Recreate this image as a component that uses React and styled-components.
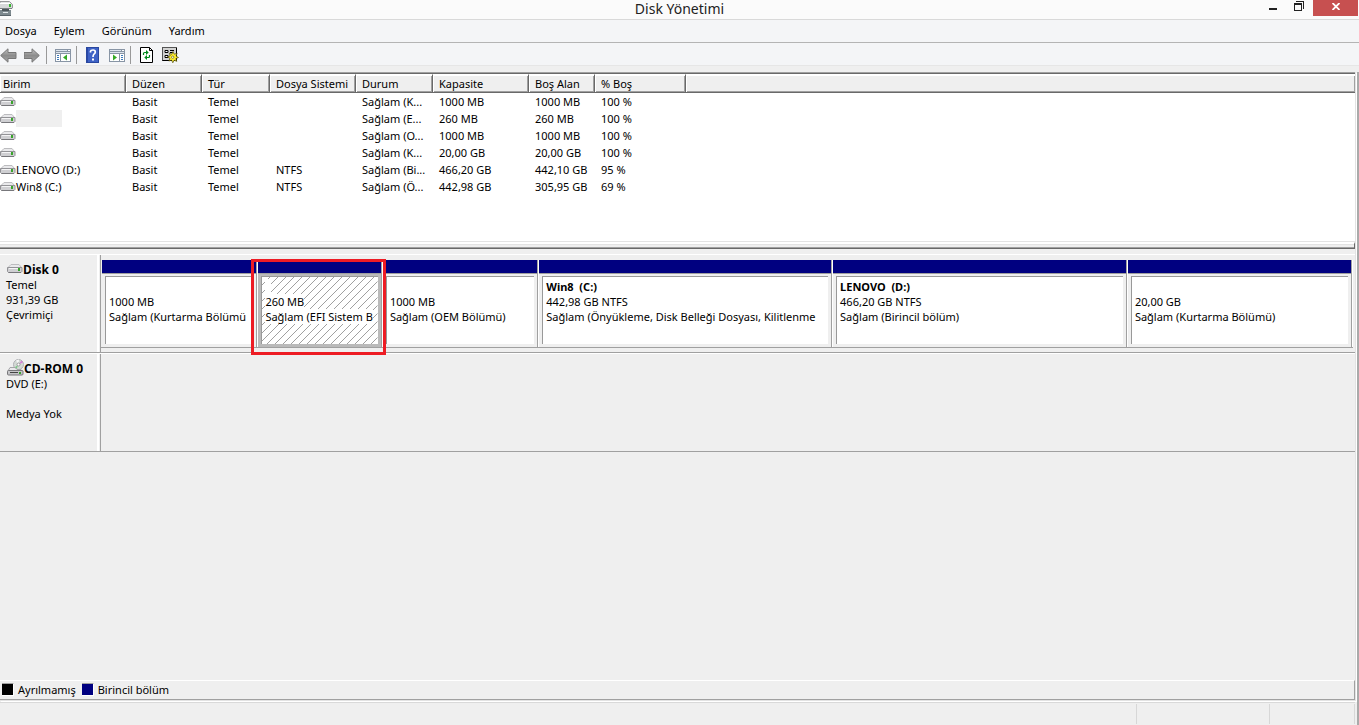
import React from 'react';
import styled, { createGlobalStyle } from 'styled-components';

const volumes = [
    { name: '', fs: '', status: 'Sağlam (K...', size: '1000 MB', free: '1000 MB', pct: '100 %' },
    { name: '', fs: '', status: 'Sağlam (E...', size: '260 MB', free: '260 MB', pct: '100 %', marked: true },
    { name: '', fs: '', status: 'Sağlam (O...', size: '1000 MB', free: '1000 MB', pct: '100 %' },
    { name: '', fs: '', status: 'Sağlam (K...', size: '20,00 GB', free: '20,00 GB', pct: '100 %' },
    { name: 'LENOVO (D:)', fs: 'NTFS', status: 'Sağlam (Bi...', size: '466,20 GB', free: '442,10 GB', pct: '95 %' },
    { name: 'Win8 (C:)', fs: 'NTFS', status: 'Sağlam (Ö...', size: '442,98 GB', free: '305,95 GB', pct: '69 %' },
];

const columns = [
    { title: 'Birim', width: 126 },
    { title: 'Düzen', width: 76 },
    { title: 'Tür', width: 68 },
    { title: 'Dosya Sistemi', width: 86 },
    { title: 'Durum', width: 77 },
    { title: 'Kapasite', width: 96 },
    { title: 'Boş Alan', width: 66 },
    { title: '% Boş', width: 91 },
];

const partitions = [
    { share: 156, name: '', size: '1000 MB', status: 'Sağlam (Kurtarma Bölümü' },
    { share: 124, name: '', size: '260 MB', status: 'Sağlam (EFI Sistem B', selected: true },
    { share: 156, name: '', size: '1000 MB', status: 'Sağlam (OEM Bölümü)' },
    { share: 294, name: 'Win8  (C:)', size: '442,98 GB NTFS', status: 'Sağlam (Önyükleme, Disk Belleği Dosyası, Kilitlenme' },
    { share: 295, name: 'LENOVO  (D:)', size: '466,20 GB NTFS', status: 'Sağlam (Birincil bölüm)' },
    { share: 225, name: '', size: '20,00 GB', status: 'Sağlam (Kurtarma Bölümü)' },
];

const GlobalStyle = createGlobalStyle`
    * {
        box-sizing: border-box;
    }
    body {
        margin: 0;
        background: #efefef;
        color: #000;
        font-family: "Noto Sans", "Open Sans", sans-serif;
        font-size: 11px;
        line-height: 15px;
    }
`

const DriveIcon = () => (
    <svg width="16" height="9" viewBox="0 0 16 9">
        <path d="M4 .5h8l2.500 3H1z" fill="#e9e9eb" stroke="#bcbcbf" />
        <path d="M.5 3.500h14.500v4l-1 1h-12.500l-1-1z" fill="#cfcfd2" stroke="#939397" />
        <path d="M2 4.500h9" stroke="#f4f4f5" />
        <rect x="11" y="4" width="2" height="3" fill="#39a52b" />
        <path d="M1.500 8.500h12.500" stroke="#77777b" />
    </svg>
)

const CdIcon = () => (
    <svg width="17" height="17" viewBox="0 0 17 17">
        <circle cx="11.500" cy="5.500" r="5" fill="#d3dad5" stroke="#b0b0b4" />
        <path d="M11.500 5.500L9 1.500l3-1z" fill="#f7f7f7" />
        <path d="M11.500 5.500l3-4 1.500 2z" fill="#d77fd8" />
        <path d="M11.500 5.500l-4 3 2 1.500z" fill="#7cc887" />
        <circle cx="11.500" cy="5.500" r="1.500" fill="#fff" stroke="#999" />
        <path d="M3 8.500h5l2 2h4l2 2H.7z" fill="#e9e9eb" stroke="#a5a5a8" />
        <rect x=".5" y="11.500" width="15.500" height="4.500" rx="1" fill="#c5c5c8" stroke="#77777a" />
        <path d="M3 13.500h8" stroke="#444" />
        <rect x="12" y="13" width="2" height="2" fill="#39a52b" />
    </svg>
)

const AppIcon = () => (
    <svg width="13" height="16" viewBox="0 0 13 16">
        <path d="M0 1.500h9.500l3 3V8H0z" fill="#e2e4e5" stroke="#98999b" />
        <path d="M0 4h12v4H0z" fill="#d7d9da" />
        <path d="M0 3.500h10" stroke="#fff" />
        <rect x="9" y="4" width="2" height="3" fill="#35b52c" />
        <path d="M0 8.500h12" stroke="#7b8083" />
        <path d="M0 10h11v5H0z" fill="#7d898e" />
        <path d="M2 9h7v2H2z" fill="#4c565b" />
        <path d="M3 12.500h5" stroke="#dfe5e8" />
        <path d="M0 15.500h11" stroke="#59646a" />
    </svg>
)

const ArrowIcon = ({ flip }) => (
    <svg width="17" height="15" viewBox="0 0 17 15">
        <defs>
            <linearGradient id={flip ? 'ag1' : 'ag2'} x1="0" y1="0" x2="0" y2="1">
                <stop offset="0" stopColor="#c4c4c4" />
                <stop offset=".5" stopColor="#8c8c8c" />
                <stop offset="1" stopColor="#a6a6a6" />
            </linearGradient>
        </defs>
        <path
            d="M.7 7.500L8 .8v3.700h8v6H8v3.700z"
            transform={flip ? 'matrix(-1 0 0 1 16 0)' : undefined}
            fill={`url(#${flip ? 'ag1' : 'ag2'})`}
            stroke="#777"
        />
    </svg>
)

const PaneIcon = ({ right }) => (
    <svg width="16" height="13" viewBox="0 0 16 13" shapeRendering="crispEdges">
        <rect width="16" height="13" fill="#8895a5" />
        <rect x="1" y="1" width="11" height="1" fill="#dfe6ef" />
        <rect x="13" y="1" width="2" height="1" fill="#fff" />
        <rect x="1" y="3" width="14" height="1" fill="#dce3ec" />
        <rect x="1" y="5" width="14" height="7" fill="#fff" />
        <rect x={right ? 10 : 5} y="5" width="1" height="7" fill="#8895a5" />
        <path d={right ? 'M12 6.500h2M12 8.500h2M12 10.500h2' : 'M2 6.500h2M2 8.500h2M2 10.500h2'} stroke="#3c7abb" />
        <path d={right ? 'M4 5.500v6l4-3z' : 'M12 5.500v6l-4-3z'} fill="#35a926" shapeRendering="auto" />
    </svg>
)

const HelpIcon = () => (
    <svg width="13" height="16" viewBox="0 0 13 16">
        <rect x=".5" y=".5" width="12" height="15" fill="#3e62c6" stroke="#29479f" />
        <path d="M1.500 1v14" stroke="#2a49a8" />
        <path d="M4.500 5.500V4.300Q4.800 3 7 3q2.300 0 2.300 2 0 1.200-1.300 2.200Q7 8 7 10" fill="none" stroke="#fff" strokeWidth="1.700" />
        <rect x="6" y="11.500" width="2" height="2" fill="#fff" />
    </svg>
)

const RefreshIcon = () => (
    <svg width="14" height="16" viewBox="0 0 14 16">
        <path d="M.5.500h9l3 3v12H.5z" fill="#fff" stroke="#000" />
        <path d="M9.500.500v3H13" fill="none" stroke="#000" />
        <path d="M3.500 8V6.500q0-1 1-1H7" fill="none" stroke="#008a1c" strokeWidth="1.200" />
        <path d="M6 3v5l2.700-2.500z" fill="#008a1c" />
        <path d="M9.500 8v1.500q0 1-1 1H6" fill="none" stroke="#008a1c" strokeWidth="1.200" />
        <path d="M7 8v5l-2.700-2.500z" fill="#008a1c" />
    </svg>
)

const SettingsIcon = () => (
    <svg width="17" height="16" viewBox="0 0 17 16">
        <rect x=".5" y=".5" width="14" height="13" fill="#d3d3d3" stroke="#555" />
        <path d="M.5 13.500h14M14.500 1v13" stroke="#000" />
        <path d="M3 3.500h3v2H3zM3 8.500h3v2H3z" fill="#fff" stroke="#000" />
        <path d="M8 3.500h4M8 5.500h3M8 8.500h2" stroke="#000" />
        <path d="M11 4.500l1.200 2.700 3-.9-1.200 2.700 2.500 1.500-2.600 1 .9 2.900-2.600-1.200-1.400 2.600-1.200-2.700-2.800.9 1.200-2.700-2.500-1.300 2.700-1.200-.9-2.700 2.500 1.200z" fill="#ffef2f" stroke="#3a3600" strokeWidth=".6" />
        <circle cx="10.700" cy="10.200" r="1.200" fill="#fff" stroke="#6b6400" strokeWidth=".7" />
    </svg>
)

const Hatch = () => (
    <HatchSvg aria-hidden="true">
        <defs>
            <pattern id="hatch" width="8" height="8" patternUnits="userSpaceOnUse">
                <path d="M0 8L8 0" stroke="#a0a0a0" shapeRendering="crispEdges" />
            </pattern>
        </defs>
        <rect width="100%" height="100%" fill="url(#hatch)" />
    </HatchSvg>
)

const App = () => {
    return (
        <Window>
            <GlobalStyle />
            <TitleBar>
                <AppIcon />
                <Title>Disk Yönetimi</Title>
                <WindowButtons>
                    <WindowButton aria-label="Simge durumuna küçült">
                        <svg width="8" height="12" viewBox="0 0 8 12"><path d="M0 9h8" stroke="#222" strokeWidth="2" /></svg>
                    </WindowButton>
                    <WindowButton aria-label="Önceki boyut">
                        <svg width="10" height="12" viewBox="0 0 10 12" shapeRendering="crispEdges">
                            <path d="M2 1.500h7.500V9" fill="none" stroke="#222" />
                            <path d="M0 3h8v8H0zM1 5v5h6V5z" fill="#222" fillRule="evenodd" />
                        </svg>
                    </WindowButton>
                    <CloseButton aria-label="Kapat">
                        <svg width="8" height="7" viewBox="0 0 8 7"><path d="M.5 0l7 7M7.500 0l-7 7" stroke="#fff" strokeWidth="1.800" /></svg>
                    </CloseButton>
                </WindowButtons>
            </TitleBar>
            <MenuBar>
                <MenuItem>Dosya</MenuItem>
                <MenuItem>Eylem</MenuItem>
                <MenuItem>Görünüm</MenuItem>
                <MenuItem>Yardım</MenuItem>
            </MenuBar>
            <ToolBar>
                <ToolButton aria-label="Geri"><ArrowIcon /></ToolButton>
                <ToolButton aria-label="İleri"><ArrowIcon flip /></ToolButton>
                <Divider />
                <ToolButton aria-label="Konsol ağacı"><PaneIcon /></ToolButton>
                <Divider />
                <ToolButton aria-label="Yardım"><HelpIcon /></ToolButton>
                <ToolButton aria-label="Eylem bölmesi"><PaneIcon right /></ToolButton>
                <Divider />
                <ToolButton aria-label="Yenile"><RefreshIcon /></ToolButton>
                <ToolButton aria-label="Ayarlar"><SettingsIcon /></ToolButton>
            </ToolBar>
            <Frame>
                <Content>
                    <ListPane>
                        <VolumeTable>
                            <colgroup>
                                {columns.map(c => <Col key={c.title} $width={c.width} />)}
                                <col />
                            </colgroup>
                            <thead>
                                <tr>
                                    {columns.map(c => <Th key={c.title}>{c.title}</Th>)}
                                    <Th $last />
                                </tr>
                            </thead>
                            <tbody>
                                {volumes.map((v, i) => (
                                    <tr key={i}>
                                        <Td>
                                            <VolumeName>
                                                <DriveIcon />
                                                {v.marked ? <EmptyMark /> : v.name}
                                            </VolumeName>
                                        </Td>
                                        <Td>Basit</Td>
                                        <Td>Temel</Td>
                                        <Td>{v.fs}</Td>
                                        <Td>{v.status}</Td>
                                        <Td>{v.size}</Td>
                                        <Td>{v.free}</Td>
                                        <Td>{v.pct}</Td>
                                        <Td />
                                    </tr>
                                ))}
                            </tbody>
                        </VolumeTable>
                    </ListPane>
                    <Splitter />
                    <DiskArea>
                        <DiskRow>
                            <DiskLabel>
                                <DiskName><DriveIcon />Disk 0</DiskName>
                                <div>Temel</div>
                                <div>931,39 GB</div>
                                <div>Çevrimiçi</div>
                            </DiskLabel>
                            <Partitions>
                                {partitions.map((p, i) => (
                                    <Partition key={i} $share={p.share}>
                                        <Bar />
                                        <PartitionBody $selected={p.selected}>
                                            <PartitionBox>
                                                {p.selected && <Hatch />}
                                                <Line $bold>{p.name || '\u00a0\u00a0'}</Line>
                                                <Line>{p.size}</Line>
                                                <Line>{p.status}</Line>
                                            </PartitionBox>
                                        </PartitionBody>
                                        {p.selected && <RedFrame />}
                                    </Partition>
                                ))}
                            </Partitions>
                        </DiskRow>
                        <DiskRow>
                            <DiskLabel>
                                <DiskName><CdIcon />CD-ROM 0</DiskName>
                                <div>DVD (E:)</div>
                                <br />
                                <div>Medya Yok</div>
                            </DiskLabel>
                        </DiskRow>
                    </DiskArea>
                    <Legend>
                        <LegendItem><Swatch $color="#000" />Ayrılmamış</LegendItem>
                        <LegendItem><Swatch $color="#000080" />Birincil bölüm</LegendItem>
                    </Legend>
                </Content>
                <StatusBar>
                    <StatusCell $grow />
                    <StatusCell $width={133} />
                    <StatusCell $width={85} />
                </StatusBar>
            </Frame>
        </Window>
    );
};

const Window = styled.div`
    min-height: 100vh;
    display: flex;
    flex-direction: column;
`

const TitleBar = styled.header`
    display: grid;
    grid-template-columns: 1fr auto 1fr;
    align-items: start;
    height: 20px;
    background: #fbfbfb;
    border-bottom: 1px solid #d9d9d9;
`

const Title = styled.div`
    font-size: 14px;
    line-height: 18px;
    color: #222;
`

const WindowButtons = styled.div`
    display: flex;
    justify-content: flex-end;
    padding-right: 1px;
`

const WindowButton = styled.button`
    display: flex;
    justify-content: center;
    width: 26px;
    height: 16px;
    padding: 0;
    border: 0;
    background: none;
`

const CloseButton = styled(WindowButton)`
    align-items: center;
    width: 45px;
    margin-left: 1px;
    padding-bottom: 3px;
    background: #c75050;
`

const MenuBar = styled.nav`
    display: flex;
    align-items: center;
    gap: 17px;
    height: 23px;
    padding: 0 0 1px 5px;
    background: #f4f5f7;
    border-bottom: 1px solid #b4b4b4;
`

const MenuItem = styled.button`
    padding: 0;
    border: 0;
    background: none;
    font: inherit;
    color: #000;
`

const ToolBar = styled.div`
    display: flex;
    align-items: center;
    height: 23px;
    padding-top: 2px;
    background: #f4f5f7;
    border-bottom: 1px solid #e6e6e6;
`

const ToolButton = styled.button`
    display: flex;
    justify-content: center;
    align-items: center;
    width: 17px;
    height: 18px;
    margin-right: 7px;
    padding: 0;
    border: 0;
    background: none;
`

const Divider = styled.span`
    width: 1px;
    height: 18px;
    margin: 0 7px 0 -2px;
    background: #999;
`

const Frame = styled.main`
    display: flex;
    flex-direction: column;
    flex: 1;
    margin-top: 6px;
    border-right: 2px solid #aaa;
`

const Content = styled.div`
    display: flex;
    flex-direction: column;
    flex: 1;
    margin-right: 1px;
    border-right: 1px solid #e3e3e3;
    border-bottom: 1px solid #e3e3e3;
    box-shadow: 1px 1px #fff;
`

const ListPane = styled.section`
    min-height: 170px;
    border-top: 1px solid #a0a0a0;
    border-bottom: 1px solid #e3e3e3;
    background: #fff;
`

const VolumeTable = styled.table`
    width: 100%;
    table-layout: fixed;
    border-collapse: separate;
    border-spacing: 0;
    border-top: 1px solid #696969;
`

const Col = styled.col`
    width: ${props => props.$width}px;
`

const Th = styled.th`
    height: 19px;
    padding: 0 0 0 6px;
    overflow: hidden;
    background: #efefef;
    border-top: 1px solid #fff;
    border-bottom: 1px solid #696969;
    border-right: ${props => props.$last ? '0' : '1px solid #696969'};
    box-shadow: inset 1px 1px #fff, inset -1px -1px #a0a0a0;
    font-weight: normal;
    text-align: left;
    white-space: nowrap;

    &:first-child {
        padding-left: 3px;
    }
`

const Td = styled.td`
    height: 17px;
    padding: 0 0 0 6px;
    white-space: nowrap;

    &:first-child {
        padding-left: 0;
    }
`

const VolumeName = styled.div`
    display: flex;
    align-items: center;
    height: 17px;
`

const EmptyMark = styled.span`
    width: 46px;
    height: 17px;
    background: #efefef;
`

const Splitter = styled.div`
    height: 7px;
    border-top: 2px solid #fff;
    border-right: 1px solid #696969;
    border-bottom: 1px solid #696969;
    box-shadow: inset 0 1px #e3e3e3, inset 0 -1px #a0a0a0;
`

const DiskArea = styled.section`
    flex: 1;
    padding-top: 5px;
`

const DiskRow = styled.div`
    display: flex;
    height: 99px;
    border-top: 1px solid #fff;
    border-bottom: 1px solid #a0a0a0;
`

const DiskLabel = styled.div`
    width: 101px;
    flex-shrink: 0;
    padding: 7px 0 0 6px;
    border-right: 1px solid #a0a0a0;
    box-shadow: inset -1px 0 #efefef, inset -3px 0 #fff;
`

const DiskName = styled.div`
    display: flex;
    align-items: center;
    height: 15px;
    padding-left: 1px;
    font-family: "Open Sans", sans-serif;
    font-size: 12px;
    font-weight: bold;

    svg {
        margin-bottom: 3px;
    }
`

const Partitions = styled.div`
    display: flex;
    flex: 1;
    min-width: 0;
    height: 93px;
    margin-right: 2px;
    padding: 5px 0 0 1px;
    border-bottom: 1px solid #a0a0a0;
`

const Partition = styled.div`
    position: relative;
    display: flex;
    flex-direction: column;
    flex: ${props => props.$share} 1 0;
    min-width: 0;
    border-right: 1px solid #fff;
`

const Bar = styled.div`
    height: 13px;
    background: #000080;
    border-right: 1px solid #a0a0a0;
`

const PartitionBody = styled.div`
    flex: 1;
    padding: 2px 3px 3px;
    background: ${props => props.$selected ? '#bababa' : '#efefef'};
    border-top: 1px solid #a0a0a0;
    border-right: 1px solid #a0a0a0;
`

const PartitionBox = styled.div`
    position: relative;
    height: 100%;
    padding: 2px 0 0 3px;
    overflow: hidden;
    background: #fff;
    border-top: 1px solid #999;
    border-left: 1px solid #999;
`

const HatchSvg = styled.svg`
    position: absolute;
    inset: 0;
    width: 100%;
    height: 100%;
`

const Line = styled.div`
    position: relative;
    width: fit-content;
    height: 15px;
    background: #fff;
    font-weight: ${props => props.$bold ? 'bold' : 'normal'};
    white-space: pre;
`

const RedFrame = styled.div`
    position: absolute;
    z-index: 1;
    inset: -1px -4px -8px -7px;
    border: 3px solid #ed1c24;
`

const Legend = styled.footer`
    display: flex;
    align-items: center;
    gap: 6px;
    height: 20px;
    padding: 0 0 1px 2px;
    border-top: 1px solid #fff;
    border-right: 1px solid #a0a0a0;
    border-bottom: 1px solid #a0a0a0;
`

const LegendItem = styled.div`
    display: flex;
    align-items: center;
    gap: 4px;
`

const Swatch = styled.span`
    width: 12px;
    height: 13px;
    background: ${props => props.$color};
    border-top: 1px solid #a0a0a0;
    border-right: 1px solid #fff;
    border-bottom: 1px solid #fff;
`

const StatusBar = styled.div`
    display: flex;
    height: 23px;
    margin: 1px 2px 0 0;
    padding: 1px 0;
    border-top: 1px solid #d9d9d9;
`

const StatusCell = styled.div`
    flex: ${props => props.$grow ? '1' : `0 0 ${props.$width}px`};
    border-right: 1px solid #d7d7d7;
`

export default App;
